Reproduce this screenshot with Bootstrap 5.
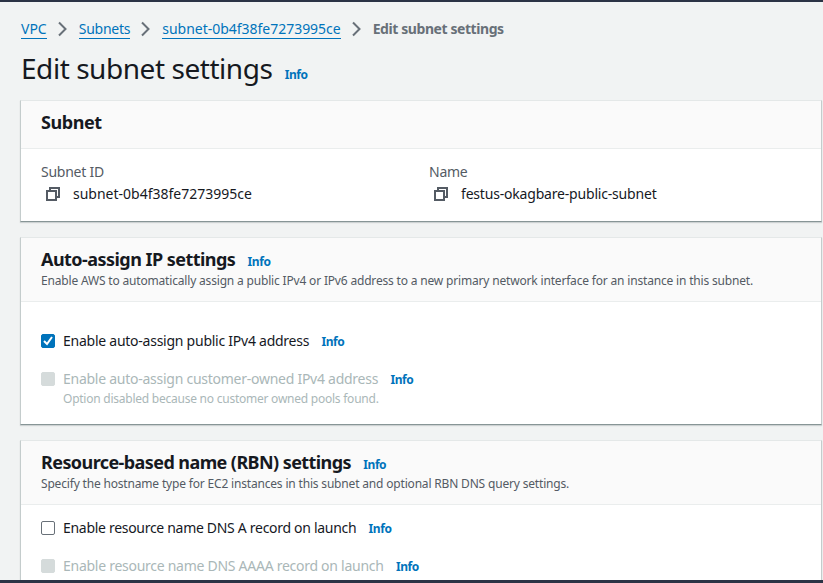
<!DOCTYPE html>
<html lang="en">
<head>
<meta charset="utf-8">
<meta name="viewport" content="width=device-width, initial-scale=1">
<title>Edit subnet settings</title>
<link href="https://cdn.jsdelivr.net/npm/bootstrap@5.3.0/dist/css/bootstrap.min.css" rel="stylesheet">
<style>
body{font-family:"Noto Sans","Open Sans",sans-serif;font-size:14px;line-height:22px;color:#16191f;background:#f1f3f3;height:583px;overflow:hidden;border-top:2px solid #2b3345;border-bottom:3px solid #2b3345}
a{color:#0073bb;text-decoration:none}
.page{height:578px;padding:16px 1px 0 20px;overflow:hidden}
.crumbs{height:22px;padding-left:1px}
.crumbs a{border-bottom:1px solid #0073bb;line-height:18px}
.crumbs .t2{letter-spacing:-.25px}
.crumbs .t3{letter-spacing:-.02px}
.crumbs svg{width:9px;height:16px;margin:0 12px 0 11px}
.crumbs .here{color:#687078;font-weight:700;letter-spacing:-.42px}
.title{height:60px;padding:10px 0 0 1px}
.title h1{font-size:28px;line-height:36px;font-weight:400;letter-spacing:-.45px}
.info{font-size:12px;font-weight:700;margin-left:12.3px;letter-spacing:-.42px}
.opt .info{padding-top:2px}
.panel{background:#fff;border:1px solid #c4cccc;border-top-color:#e4e8e8;border-bottom-color:#879596;border-radius:0;margin-bottom:15px;box-shadow:0 1px 1px rgba(0,28,36,.15)}
.panel-head{background:#fafafa;border-bottom:1px solid #eaeded;padding:10px 20px 0;height:64px}
.panel-head.short{height:48px}
.panel h2{font-size:18px;line-height:22px;font-weight:700;letter-spacing:-.45px}
.panel .h-a{letter-spacing:-.54px}
.panel .h-b{letter-spacing:-.58px}
.desc{font-size:12px;line-height:16px;color:#545b64;letter-spacing:-.177px}
.facts{padding:12px 4px 0 20px;height:72px}
.fact-label{color:#545b64;letter-spacing:-.25px}
.v2{letter-spacing:-.19px}
.copy{width:16px;height:16px;margin:0 12px 0 4px}
.opts{padding:28px 20px 0;height:122px}
.opts.tight{padding-top:12px}
.opt{height:22px}
.box{width:14px;height:14px;border:1px solid #687078;border-radius:2px;margin-right:8px}
.box.on{background:#0073bb;border-color:#0073bb}
.off .box{background:#d5dbdb;border-color:#d5dbdb}
.off .txt,.off.note{color:#aab7b8}
.txt{letter-spacing:-.25px}
.o2{letter-spacing:-.26px}
.o3{letter-spacing:-.3px}
.o4{letter-spacing:-.27px}
.note{font-size:12px;line-height:18px;padding-left:22px;letter-spacing:-.24px}
</style>
</head>
<body>
<svg class="d-none"><symbol id="copy" viewBox="0 0 16 16"><path d="M2 5h9v9H2zM5 5V2h9v9h-3" fill="none" stroke="#545b64" stroke-width="2"/></symbol>
<symbol id="chev" viewBox="0 0 9 16"><path d="M1 1.500 7.500 8 1 14.500" fill="none" stroke="#687078" stroke-width="2"/></symbol></svg>
<main class="page">
<nav class="crumbs d-flex align-items-center"><a href="#">VPC</a><svg><use href="#chev"/></svg><a class="t2" href="#">Subnets</a><svg><use href="#chev"/></svg><a class="t3" href="#">subnet-0b4f38fe7273995ce</a><svg><use href="#chev"/></svg><span class="here">Edit subnet settings</span></nav>
<header class="title d-flex align-items-baseline"><h1 class="m-0">Edit subnet settings</h1><a class="info" href="#">Info</a></header>
<section class="card panel">
<div class="panel-head short"><h2 class="m-0">Subnet</h2></div>
<div class="row g-0 facts">
<div class="col"><div class="fact-label">Subnet ID</div><div class="d-flex align-items-center"><svg class="copy"><use href="#copy"/></svg><span>subnet-0b4f38fe7273995ce</span></div></div>
<div class="col"><div class="fact-label">Name</div><div class="d-flex align-items-center"><svg class="copy"><use href="#copy"/></svg><span class="v2">festus-okagbare-public-subnet</span></div></div>
</div></section>
<section class="card panel">
<div class="panel-head"><div class="d-flex align-items-baseline"><h2 class="m-0 h-a">Auto-assign IP settings</h2><a class="info" href="#">Info</a></div><div class="desc">Enable AWS to automatically assign a public IPv4 or IPv6 address to a new primary network interface for an instance in this subnet.</div></div>
<div class="opts">
<div class="opt d-flex align-items-center"><span class="box on d-flex"><svg viewBox="0 0 12 12"><path d="M2 6l3 3 5-7" fill="none" stroke="#fff" stroke-width="2"/></svg></span><span class="txt">Enable auto-assign public IPv4 address</span><a class="info" href="#">Info</a></div>
<div class="opt off d-flex align-items-center mt-3"><span class="box"></span><span class="txt o2">Enable auto-assign customer-owned IPv4 address</span><a class="info" href="#">Info</a></div>
<div class="note off">Option disabled because no customer owned pools found.</div>
</div></section>
<section class="card panel">
<div class="panel-head"><div class="d-flex align-items-baseline"><h2 class="m-0 h-b">Resource-based name (RBN) settings</h2><a class="info" href="#">Info</a></div><div class="desc">Specify the hostname type for EC2 instances in this subnet and optional RBN DNS query settings.</div></div>
<div class="opts tight">
<div class="opt d-flex align-items-center"><span class="box"></span><span class="txt o3">Enable resource name DNS A record on launch</span><a class="info" href="#">Info</a></div>
<div class="opt off d-flex align-items-center mt-3"><span class="box"></span><span class="txt o4">Enable resource name DNS AAAA record on launch</span><a class="info" href="#">Info</a></div>
</div></section>
</main>
<script src="https://cdn.jsdelivr.net/npm/bootstrap@5.3.0/dist/js/bootstrap.bundle.min.js"></script>
</body>
</html>
